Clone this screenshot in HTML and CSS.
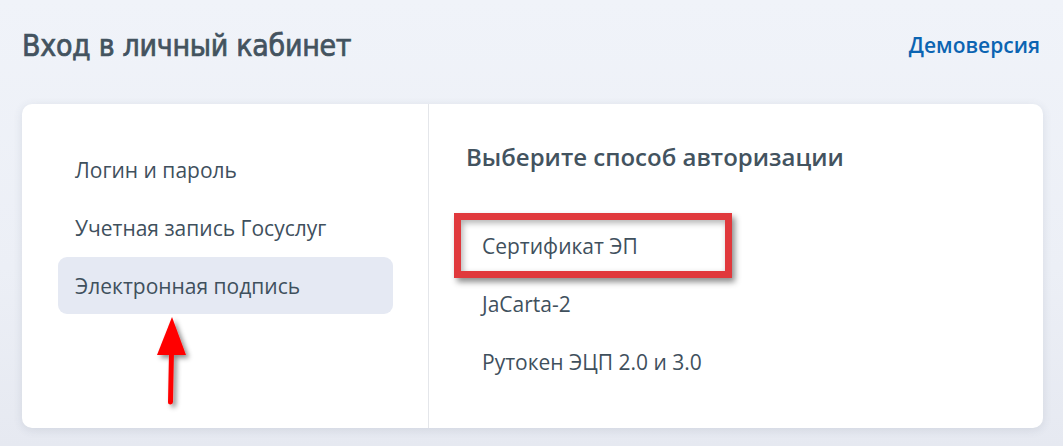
FILE: index.html
```html
<!DOCTYPE html>
<html lang="ru">
<head>
<meta charset="utf-8">
<link rel="stylesheet" href="styles.css">
</head>
<body>
<div class="page">
  <header class="top">
    <h1 class="title">Вход в личный кабинет</h1>
    <a class="demo" href="#">Демоверсия</a>
  </header>
  <section class="card">
    <nav class="side">
      <div class="item">Логин и пароль</div>
      <div class="item">Учетная запись Госуслуг</div>
      <div class="item active">Электронная подпись</div>
      <svg class="arrow" width="60" height="100" viewBox="0 0 60 100">
        <defs>
          <filter id="sh" x="-50%" y="-50%" width="200%" height="200%">
            <feDropShadow dx="3" dy="3" stdDeviation="2.5" flood-color="#000" flood-opacity="0.45"/>
          </filter>
        </defs>
        <g filter="url(#sh)">
          <path d="M29.5 38 L28.5 88" stroke="#ff0000" stroke-width="5" stroke-linecap="round" fill="none"/>
          <path d="M30 3 L15 41 L44 41 Z" fill="#ff0000"/>
        </g>
      </svg>
    </nav>
    <div class="main">
      <h2 class="subtitle">Выберите способ авторизации</h2>
      <div class="opt">Сертификат ЭП<span class="mark"></span></div>
      <div class="opt">JaCarta-2</div>
      <div class="opt">Рутокен ЭЦП 2.0 и 3.0</div>
    </div>
  </section>
</div>
</body>
</html>
```
FILE: styles.css
```css
html, body {
  margin: 0;
  padding: 0;
}
body {
  width: 1063px;
  height: 446px;
  overflow: hidden;
  background: linear-gradient(180deg, #f0f3f9 0%, #eceff6 60%, #e6e9f1 100%);
  font-family: "Open Sans", "Noto Sans", sans-serif;
  color: #3f505d;
}
.page {
  padding: 0 23px 0 22px;
}
.top {
  display: flex;
  align-items: center;
  justify-content: space-between;
  height: 90px;
}
.title {
  margin: 0;
  font-family: "DejaVu Sans Condensed", sans-serif;
  font-weight: 400;
  font-size: 30px;
  letter-spacing: -0.3px;
  color: #43535f;
  -webkit-text-stroke: 0.7px #43535f;
}
.demo {
  font-size: 21px;
  font-weight: 600;
  color: #0b64b2;
  text-decoration: none;
}
.card {
  margin-top: 14px;
  display: flex;
  background: #fff;
  border-radius: 10px;
  height: 324px;
  box-shadow: 0 2px 10px rgba(60, 70, 100, 0.12);
  width: 1021px;
}
.side {
  position: relative;
  width: 407px;
  box-sizing: border-box;
  padding: 37px 36px 0 36px;
  border-right: 1px solid #e4e6ea;
  display: flex;
  flex-direction: column;
}
.item {
  height: 58px;
  display: flex;
  align-items: center;
  padding-left: 17px;
  font-size: 21px;
  border-radius: 9px;
  width: 335px;
  box-sizing: border-box;
}
.item.active {
  background: #e5e9f3;
  height: 57px;
}
.arrow {
  position: absolute;
  left: 120px;
  top: 210px;
}
.main {
  flex: 1;
  padding: 38px 0 0 37px;
}
.subtitle {
  margin: 0 0 45px 0;
  font-size: 24px;
  font-weight: 600;
  color: #43535f;
  height: 30px;
  line-height: 30px;
}
.opt {
  position: relative;
  height: 58px;
  display: flex;
  align-items: center;
  padding-left: 16px;
  font-size: 21px;
}
.mark {
  position: absolute;
  left: -12px;
  top: -4px;
  width: 264px;
  height: 51px;
  border: 7px solid #e0383c;
  box-shadow: 3px 4px 6px rgba(0, 0, 0, 0.45), inset 2px 3px 6px rgba(0, 0, 0, 0.3);
}
```
